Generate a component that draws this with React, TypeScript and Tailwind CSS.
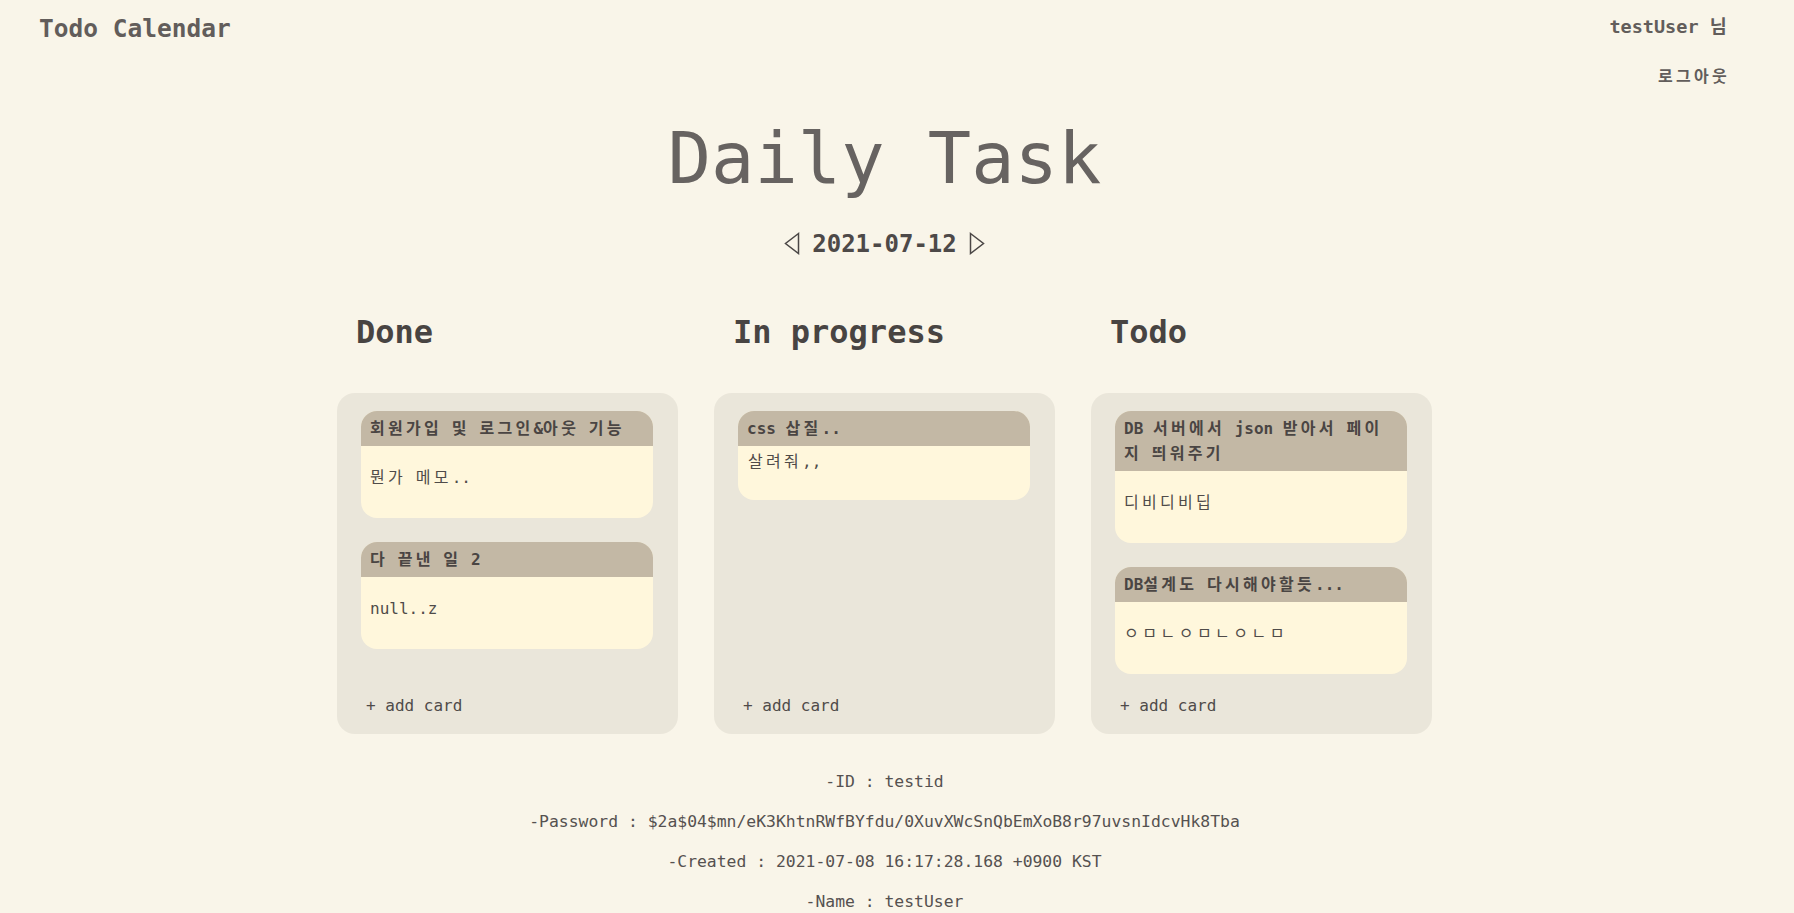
import type { ReactNode } from "react";

// Hangul runs get a little tracking so they take the width the reference's fallback font gives them
const HANGUL = /([\u1100-\u11ff\u3130-\u318f\uac00-\ud7a3]+)/;
const JAMO = /^[\u3130-\u318f]+$/;

const ko = (text: string): ReactNode[] =>
  text.split(HANGUL).map((part, i) => {
    if (!HANGUL.test(part)) return part;
    return (
      <span key={i} className={JAMO.test(part) ? "tracking-[3.5px]" : "tracking-[3.3px]"}>
        {part}
      </span>
    );
  });

type Card = {
  title: string;
  memo: string;
  tight?: boolean;
};

type Column = {
  name: string;
  cards: Card[];
};

const columns: Column[] = [
  {
    name: "Done",
    cards: [
      { title: "회원가입 및 로그인&아웃 기능", memo: "뭔가 메모.." },
      { title: "다 끝낸 일 2", memo: "null..z" },
    ],
  },
  {
    name: "In progress",
    cards: [{ title: "css 삽질..", memo: "살려줘,,", tight: true }],
  },
  {
    name: "Todo",
    cards: [
      { title: "DB 서버에서 json 받아서 페이지 띄워주기", memo: "디비디비딥" },
      { title: "DB설계도 다시해야할듯...", memo: "ㅇㅁㄴㅇㅁㄴㅇㄴㅁ" },
    ],
  },
];

const userInfo = [
  "-ID : testid",
  "-Password : $2a$04$mn/eK3KhtnRWfBYfdu/0XuvXWcSnQbEmXoB8r97uvsnIdcvHk8Tba",
  "-Created : 2021-07-08 16:17:28.168 +0900 KST",
  "-Name : testUser",
];

const TaskCard = ({ card }: { card: Card }) => {
  return (
    <div className="w-[292px] rounded-2xl overflow-hidden bg-[#fff7dc]">
      <div className="bg-[#c3b8a5] pl-[9px] pr-[14px] py-[5px] text-[16px] leading-[25px] font-bold text-[#4a4543] break-all">
        {ko(card.title)}
      </div>
      <div
        className={
          card.tight
            ? "h-[54px] px-[10px] pt-[4px] text-[16px] leading-6 text-[#4f4b49]"
            : "h-[72px] px-[9px] pt-[20px] text-[16px] leading-6 text-[#4f4b49]"
        }
      >
        {ko(card.memo)}
      </div>
    </div>
  );
};

const Arrow = ({ dir }: { dir: "left" | "right" }) => {
  return (
    <svg width="16" height="23" viewBox="0 0 16 23" className="text-[#4b4746]">
      {dir === "left" ? (
        <path d="M14.5 1.5 L1.5 11.5 L14.5 21.5 Z" fill="none" stroke="currentColor" strokeWidth="1.5" strokeLinejoin="miter" />
      ) : (
        <path d="M1.5 1.5 L14.5 11.5 L1.5 21.5 Z" fill="none" stroke="currentColor" strokeWidth="1.5" strokeLinejoin="miter" />
      )}
    </svg>
  );
};

export default function App() {
  return (
    <div className="min-h-screen bg-[#f9f5e9] font-['DejaVu_Sans_Mono','Noto_Sans_CJK_KR',monospace] text-[#5f5a58]">
      <header className="flex justify-between pl-[39px] pr-[64px]">
        <h1 className="pt-[17px] text-[24.5px] leading-none font-bold text-[#625d5b]">Todo Calendar</h1>
        <div className="flex flex-col items-end pt-[18px]">
          <div className="text-[18.5px] leading-none font-bold text-[#625d5b]">
            testUser {ko("님")}
          </div>
          <button className="mt-[28px] text-[16px] leading-6 font-bold text-[#625d5b]">{ko("로그아웃")}</button>
        </div>
      </header>

      <main className="flex flex-col items-center pr-[25px]">
        <h2 className="mt-[33px] text-[72px] leading-none text-[#676361]">Daily Task</h2>

        <div className="mt-[38px] flex items-center gap-[12px]">
          <Arrow dir="left" />
          <span className="text-[24px] leading-none font-bold text-[#4d4948]">2021-07-12</span>
          <Arrow dir="right" />
        </div>

        <div className="mt-[60px] flex gap-[36px]">
          {columns.map((col) => (
            <section key={col.name} className="flex flex-col w-[341px]">
              <h3 className="pl-[19px] text-[32px] leading-none font-bold text-[#484442]">{col.name}</h3>
              <div className="mt-[45px] h-[341px] flex flex-col rounded-[18px] bg-[#eae6da] pt-[18px] pb-[16px]">
                <div className="flex flex-col items-center gap-[24px] pr-[1px]">
                  {col.cards.map((card) => (
                    <TaskCard key={card.title} card={card} />
                  ))}
                </div>
                <button className="mt-auto self-start pl-[29px] text-[16px] leading-6 text-[#4f4b49]">+ add card</button>
              </div>
            </section>
          ))}
        </div>

        <div className="mt-[36px] flex flex-col items-center gap-[16px] pb-[20px]">
          {userInfo.map((line) => (
            <p key={line} className="text-[16.4px] leading-6 text-[#555150]">
              {line}
            </p>
          ))}
        </div>
      </main>
    </div>
  );
}
